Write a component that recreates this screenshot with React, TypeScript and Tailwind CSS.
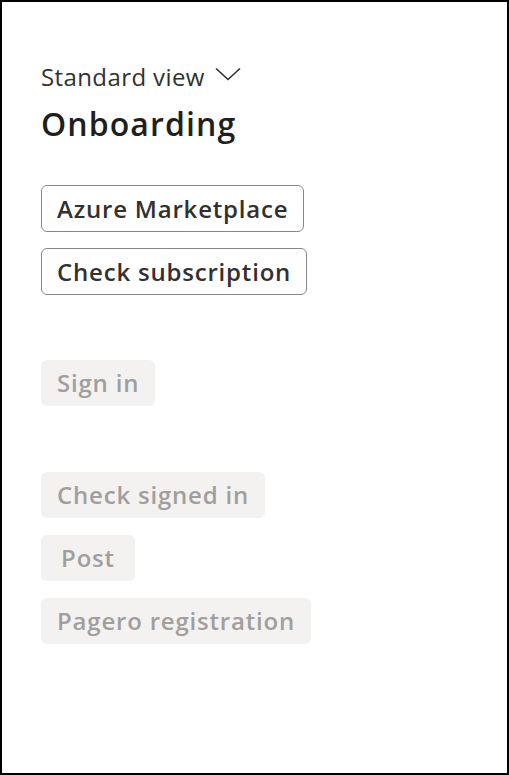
import React from "react";

const font = { fontFamily: '"Open Sans", "Noto Sans", sans-serif' };

function Btn({ label, disabled }: { label: string; disabled?: boolean }) {
  return disabled ? (
    <div className="flex h-[46px] w-fit min-w-[94px] items-center justify-center rounded-[6px] bg-[#f3f2f1] px-[16px] text-[24px] font-semibold tracking-[0.8px] text-[#a19f9d]">
      {label}
    </div>
  ) : (
    <div className="flex h-[47px] w-fit min-w-[94px] items-center justify-center rounded-[6px] border border-[#8a8886] bg-white px-[15px] text-[24px] font-semibold tracking-[0.8px] text-[#323130]">
      {label}
    </div>
  );
}

export default function App() {
  return (
    <div
      className="box-border flex h-[775px] w-[509px] flex-col border-2 border-black bg-white pl-[39px] pt-[57px]"
      style={font}
    >
      <div className="flex items-center gap-[10px] text-[24px] leading-[36px] tracking-[0.4px] text-[#323130]">
        <span>Standard view</span>
        <svg width="26" height="14" viewBox="0 0 26 14" fill="none" className="mt-[-6px]">
          <polyline points="1,1.5 13,12.5 25,1.5" stroke="#323130" strokeWidth="1.6" />
        </svg>
      </div>
      <div className="mt-[9px] text-[32px] font-semibold leading-[40px] tracking-[1.1px] text-[#201f1e]">Onboarding</div>
      <div className="mt-[41px] flex flex-col gap-[16px]">
        <Btn label="Azure Marketplace" />
        <Btn label="Check subscription" />
      </div>
      <div className="mt-[65px] flex flex-col gap-[17px]">
        <Btn label="Sign in" disabled />
      </div>
      <div className="mt-[66px] flex flex-col gap-[17px]">
        <Btn label="Check signed in" disabled />
        <Btn label="Post" disabled />
        <Btn label="Pagero registration" disabled />
      </div>
    </div>
  );
}
